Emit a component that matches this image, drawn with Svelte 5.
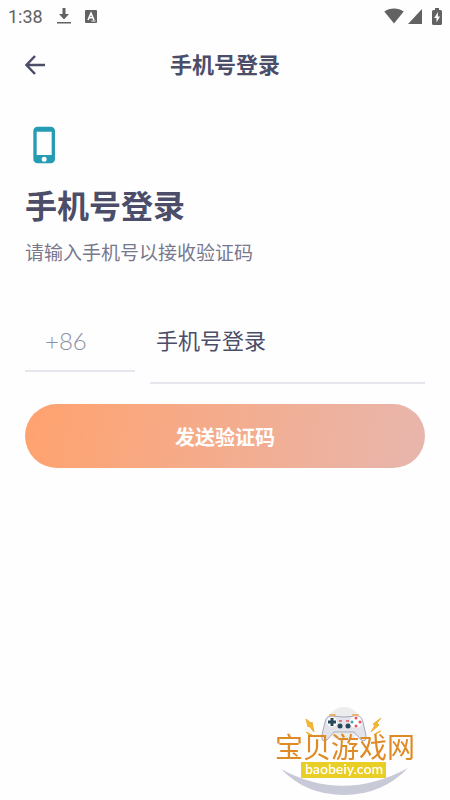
<script lang="ts">
  let areaCode = "+86";
  let phone = "";

  function sendCode() {
    phone = phone.trim();
  }
</script>

<div class="status">
  <span class="time">1:38</span>
  <svg class="download" width="14" height="18" viewBox="0 0 14 18" aria-hidden="true">
    <path d="M5.5 1h3v6H12l-5 5.5L2 7h3.5zM0 15h14v1.6H0z" />
  </svg>
  <svg class="keyboard" width="12" height="13" viewBox="0 0 12 13" aria-hidden="true">
    <rect width="12" height="13" rx="1" />
    <path d="M3 10 6 3.2 9 10M4.2 7.8h3.6" fill="none" stroke="#fff" stroke-width="1.6" />
    <path d="M6.5 11h4" stroke="#fff" stroke-width="1" />
  </svg>
  <div class="signals">
    <svg width="20" height="16" viewBox="0 0 20 16" aria-hidden="true">
      <path d="M10 15.5.3 3.6C3 1.5 6.3.5 10 .5s7 1 9.7 3.1z" />
    </svg>
    <svg width="14" height="15" viewBox="0 0 14 15" aria-hidden="true">
      <path d="M14 0v15H0z" />
    </svg>
    <svg class="battery" width="10" height="17" viewBox="0 0 10 17" aria-hidden="true">
      <path d="M3 0h4v2h1.5Q10 2 10 3.5v12Q10 17 8.5 17h-7Q0 17 0 15.5v-12Q0 2 1.5 2H3z" />
      <path d="M6 4 2.2 10h2.3v4.5L8 8.5H5.8z" fill="#fff" />
    </svg>
  </div>
</div>

<header>
  <button class="back" aria-label="返回">
    <svg width="20" height="20" viewBox="0 0 20 20" aria-hidden="true">
      <path d="M10 1 1.5 10l8.5 9M1.5 10H20" />
    </svg>
  </button>
  <span class="title">手机号登录</span>
</header>

<main>
  <svg class="phone" width="40" height="40" viewBox="0 0 24 24" aria-hidden="true">
    <path
      d="M15.5 1h-8A2.5 2.5 0 0 0 5 3.5v17A2.5 2.5 0 0 0 7.5 23h8a2.5 2.5 0 0 0 2.5-2.5v-17A2.5 2.5 0 0 0 15.5 1zm-4 21a1.5 1.5 0 1 1 0-3 1.5 1.5 0 0 1 0 3zm4.5-4H7V4h9z"
    />
  </svg>
  <h1>手机号登录</h1>
  <p>请输入手机号以接收验证码</p>

  <form on:submit|preventDefault={sendCode}>
    <div class="fields">
      <input class="code" type="text" aria-label="区号" bind:value={areaCode} />
      <input
        class="number"
        type="tel"
        aria-label="手机号"
        placeholder="手机号登录"
        bind:value={phone}
      />
    </div>
    <button class="send" type="submit">发送验证码</button>
  </form>
</main>

<svg class="watermark" width="150" height="96" viewBox="0 0 150 96" aria-hidden="true">
  <circle cx="74" cy="20" r="17" fill="#ececed" />
  <!-- crescent -->
  <path d="M11 65Q73 99 138 64 112 91 74 91 36 91 11 65z" fill="#c9cad8" />
  <!-- gamepad -->
  <path
    d="M61 12Q74 14 87 12q5 0 6 6l3 13q1 8-5 5L84 28H64l-7 8q-6 3-5-5l3-13q1-6 6-6z"
    fill="#e2e3eb"
    stroke="#a9aabb"
    stroke-width="1"
  />
  <path d="M60 11h5M83 11h5" stroke="#edb36d" stroke-width="2" stroke-linecap="round" />
  <circle cx="62" cy="18" r="5" fill="#fff" />
  <path d="M62 14v8M58 18h8" stroke="#29475b" stroke-width="3" />
  <circle cx="86" cy="18" r="6" fill="#fff" />
  <circle cx="86" cy="14" r="1.5" fill="#e7525d" />
  <circle cx="86" cy="22" r="1.5" fill="#e7525d" />
  <circle cx="82" cy="18" r="1.5" fill="#38a6bd" />
  <circle cx="90" cy="18" r="1.5" fill="#e7525d" />
  <path d="M69 17h3M76 17h3" stroke="#e7525d" stroke-width="1.5" />
  <circle cx="70" cy="22" r="2.5" fill="#29475b" />
  <circle cx="78" cy="22" r="2.5" fill="#29475b" />
  <!-- sparks -->
  <path
    d="m36 15 5 4 1-1 2 10-5-6-1 1zM36 28l6 3h-3zM111 14l-8 6 2 1-4 7 8-7-2-2zM111 27l-5 2-2 2z"
    fill="#f3b62f"
    stroke="#efb038"
    stroke-width="1"
    stroke-linejoin="round"
  />
  <rect x="31" y="58" width="85" height="16" fill="#e9cf25" />
  <text class="site" x="5" y="54">宝贝游戏网</text>
  <text class="domain" x="74" y="70" text-anchor="middle">baobeiy.com</text>
</svg>

<style>
  :global(body) {
    margin: 0;
    background: #fefefe;
    color: #4b4d69;
    font-family: Lato, "Noto Sans CJK SC", sans-serif;
  }

  .status {
    display: flex;
    align-items: center;
    box-sizing: border-box;
    height: 32px;
    padding: 0 8px;
    color: #626262;
    fill: #626262;
    font: 400 18px Roboto, sans-serif;
  }

  .download {
    margin-left: 14px;
  }

  .keyboard {
    margin-left: 14px;
  }

  .signals {
    display: flex;
    align-items: center;
    gap: 4px;
    margin-left: auto;
  }

  .battery {
    margin-left: 6px;
  }

  header {
    display: grid;
    grid-template-columns: 40px 1fr 40px;
    align-items: center;
    height: 66px;
    padding: 0 16px;
  }

  .back {
    display: flex;
    padding: 9px;
    border: 0;
    background: transparent;
    cursor: pointer;
  }

  .back path {
    fill: none;
    stroke: #4b4d69;
    stroke-width: 2.5;
  }

  .title {
    text-align: center;
    font-size: 22px;
    font-weight: 700;
    line-height: 28px;
  }

  main {
    padding: 27px 25px 0;
  }

  .phone {
    display: block;
    fill: #259cb4;
  }

  h1 {
    margin: 19px 0 0;
    font-size: 32px;
    font-weight: 700;
    line-height: 44px;
  }

  p {
    margin: 11px 0 43px;
    color: #77788e;
    font-size: 19px;
    line-height: 28px;
  }

  .fields {
    display: flex;
    align-items: flex-start;
    gap: 15px;
  }

  input {
    box-sizing: border-box;
    min-width: 0;
    height: 62px;
    padding: 0 6px;
    border: 0;
    border-bottom: 2px solid #e5e6ee;
    border-radius: 0;
    outline: 0;
    background: transparent;
    color: #4b4d69;
    font-family: inherit;
    font-size: 22px;
  }

  .code {
    width: 110px;
    padding-left: 20px;
    color: #8e90a4;
    font-size: 24px;
    font-weight: 300;
  }

  .number {
    flex: 1;
    height: 74px;
    padding-bottom: 12px;
  }

  .number::placeholder {
    color: #4b4d69;
    opacity: 1;
  }

  .send {
    width: 100%;
    height: 64px;
    margin-top: 20px;
    border: 0;
    border-radius: 32px;
    background: linear-gradient(100deg, #ffa26e, #e8b6ad);
    color: #fff;
    font-family: inherit;
    font-size: 20px;
    font-weight: 700;
    cursor: pointer;
  }

  .watermark {
    position: fixed;
    right: 30px;
    bottom: 0;
    pointer-events: none;
  }

  .site {
    fill: #df8a25;
    font-family: Roboto, "Noto Sans CJK SC", sans-serif;
    font-size: 28px;
  }

  .domain {
    fill: #fff;
    font-family: Lato, sans-serif;
    font-size: 14px;
    font-weight: 600;
  }
</style>
